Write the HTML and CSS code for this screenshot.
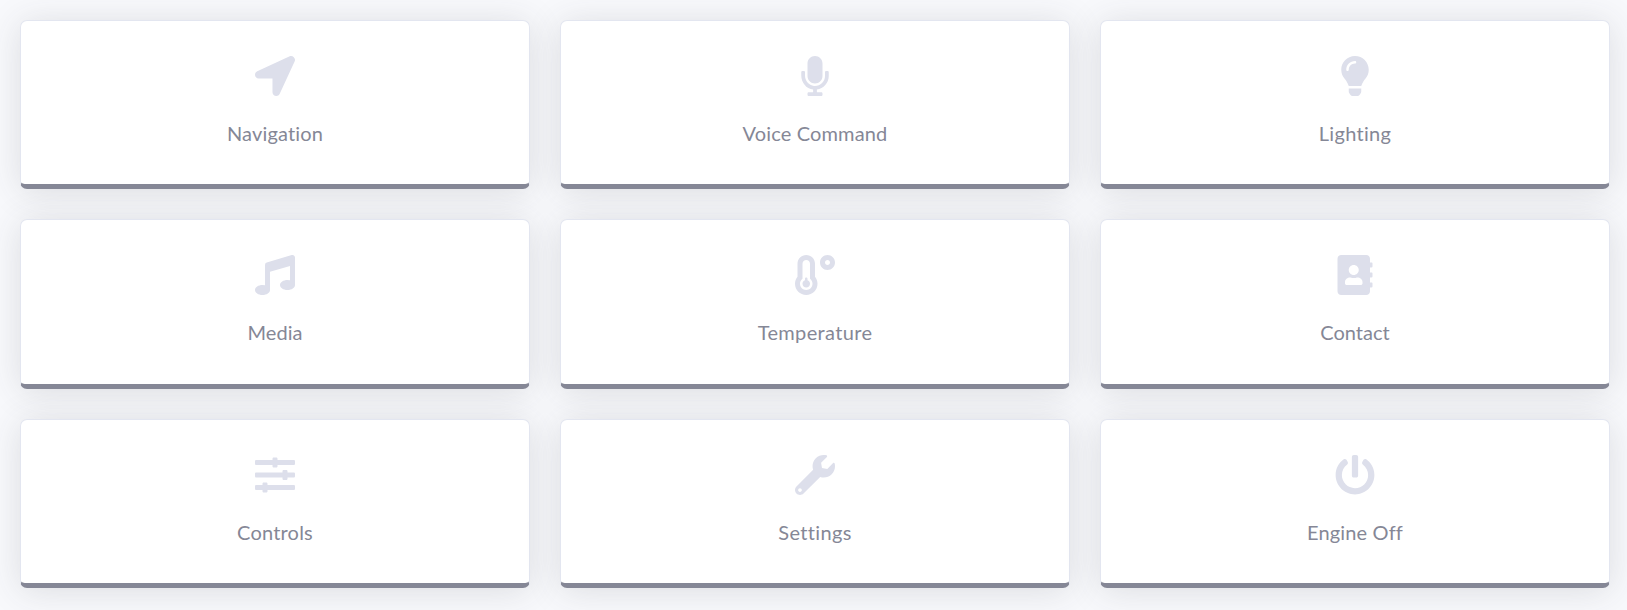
FILE: index.html
```html
<!DOCTYPE html>
<html lang="en">
<head>
<meta charset="utf-8">
<title>Car Dashboard</title>
<link rel="stylesheet" href="styles.css">
</head>
<body>
<main class="grid">
  <a class="card"><svg class="icon" viewBox="0 0 512 512"><path d="M444.52 3.52L28.74 195.42c-47.97 22.39-31.98 92.75 19.19 92.75h175.91v175.91c0 51.17 70.36 67.17 92.75 19.19l191.9-415.78c15.99-38.39-25.59-79.97-63.97-63.95z"/></svg><span class="label navigation">Navigation</span></a>
  <a class="card"><svg class="icon" viewBox="-80 0 512 512"><path d="M176 352c53.02 0 96-42.98 96-96V96c0-53.02-42.98-96-96-96S80 42.98 80 96v160c0 53.02 42.98 96 96 96zm160-160h-16c-8.84 0-16 7.16-16 16v48c0 74.8-64.49 134.82-140.79 127.38C96.71 376.89 48 317.11 48 250.3V208c0-8.84-7.16-16-16-16H16c-8.84 0-16 7.16-16 16v40.16c0 89.64 63.97 169.55 152 181.69V464H96c-8.84 0-16 7.16-16 16v16c0 8.84 7.16 16 16 16h160c8.84 0 16-7.16 16-16v-16c0-8.84-7.16-16-16-16h-56v-33.77C285.71 418.47 352 344.9 352 256v-48c0-8.84-7.16-16-16-16z"/></svg><span class="label voice">Voice Command</span></a>
  <a class="card"><svg class="icon" viewBox="-80 0 512 512"><path d="M96.06 454.35c.01 6.29 1.87 12.45 5.36 17.69l17.09 25.69a31.99 31.99 0 0 0 26.64 14.28h61.71a31.99 31.99 0 0 0 26.64-14.28l17.09-25.69a31.989 31.989 0 0 0 5.36-17.69l.04-38.35H96.01l.05 38.35zM0 176c0 44.37 16.45 84.85 43.56 115.78 16.52 18.85 42.36 58.23 52.21 91.45.04.26.07.52.11.78h160.24c.04-.26.07-.51.11-.78 9.85-33.22 35.69-72.6 52.21-91.45C335.55 260.85 352 220.37 352 176 352 78.61 272.91-.3 175.45 0 73.44.31 0 82.97 0 176zm176-80c-44.11 0-80 35.89-80 80 0 8.84-7.16 16-16 16s-16-7.16-16-16c0-61.76 50.24-112 112-112 8.84 0 16 7.16 16 16s-7.16 16-16 16z"/></svg><span class="label lighting">Lighting</span></a>
  <a class="card"><svg class="icon" viewBox="0 0 512 512"><path d="M470.38 1.51L150.41 96A32 32 0 0 0 128 126.51v261.41A139 139 0 0 0 96 384c-53 0-96 28.66-96 64s43 64 96 64 96-28.66 96-64V214.32l256-75v184.61a138.4 138.4 0 0 0-32-3.93c-53 0-96 28.66-96 64s43 64 96 64 96-28.65 96-64V32a32 32 0 0 0-41.62-30.49z"/></svg><span class="label media">Media</span></a>
  <a class="card"><svg class="icon" viewBox="0 0 512 512"><path d="M416 0c-52.9 0-96 43.1-96 96s43.1 96 96 96 96-43.1 96-96-43.1-96-96-96zm0 128c-17.7 0-32-14.3-32-32s14.3-32 32-32 32 14.3 32 32-14.3 32-32 32zm-160-16C256 50.1 205.9 0 144 0S32 50.1 32 112v166.5C12.3 303.2 0 334 0 368c0 79.5 64.5 144 144 144s144-64.5 144-144c0-34-12.3-64.9-32-89.5V112zM144 448c-44.1 0-80-35.9-80-80 0-25.5 12.2-48.9 32-63.8V112c0-26.5 21.5-48 48-48s48 21.5 48 48v192.2c19.8 14.8 32 38.3 32 63.8 0 44.1-35.9 80-80 80zm16-125.1V304c0-8.8-7.2-16-16-16s-16 7.2-16 16v18.9c-18.6 6.6-32 24.2-32 45.1 0 26.5 21.5 48 48 48s48-21.5 48-48c0-20.9-13.4-38.5-32-45.1z"/></svg><span class="label temperature">Temperature</span></a>
  <a class="card"><svg class="icon" viewBox="-32 0 512 512"><path d="M436 160c6.6 0 12-5.4 12-12v-40c0-6.6-5.4-12-12-12h-20V48c0-26.5-21.5-48-48-48H48C21.5 0 0 21.5 0 48v416c0 26.5 21.5 48 48 48h320c26.5 0 48-21.5 48-48v-48h20c6.6 0 12-5.4 12-12v-40c0-6.6-5.4-12-12-12h-20v-64h20c6.6 0 12-5.4 12-12v-40c0-6.6-5.4-12-12-12h-20v-64h20zm-228-32c35.3 0 64 28.7 64 64s-28.7 64-64 64-64-28.7-64-64 28.7-64 64-64zm112 236.8c0 10.6-10 19.2-22.4 19.2H118.4C106 384 96 375.4 96 364.8v-19.2c0-31.8 30.1-57.6 67.2-57.6h5c12.3 5.1 25.7 8 39.8 8s27.6-2.9 39.8-8h5c37.1 0 67.2 25.8 67.2 57.6v19.2z"/></svg><span class="label contact">Contact</span></a>
  <a class="card"><svg class="icon" viewBox="0 0 512 512"><path d="M496 384H160v-16c0-8.8-7.2-16-16-16h-32c-8.8 0-16 7.2-16 16v16H16c-8.8 0-16 7.2-16 16v32c0 8.8 7.2 16 16 16h80v16c0 8.8 7.2 16 16 16h32c8.8 0 16-7.2 16-16v-16h336c8.8 0 16-7.2 16-16v-32c0-8.8-7.2-16-16-16zm0-160h-80v-16c0-8.8-7.2-16-16-16h-32c-8.8 0-16 7.2-16 16v16H16c-8.8 0-16 7.2-16 16v32c0 8.8 7.2 16 16 16h336v16c0 8.8 7.2 16 16 16h32c8.8 0 16-7.2 16-16v-16h80c8.8 0 16-7.2 16-16v-32c0-8.8-7.2-16-16-16zm0-160H288V48c0-8.8-7.2-16-16-16h-32c-8.8 0-16 7.2-16 16v16H16C7.2 64 0 71.2 0 80v32c0 8.8 7.2 16 16 16h208v16c0 8.8 7.2 16 16 16h32c8.8 0 16-7.2 16-16v-16h208c8.8 0 16-7.2 16-16V80c0-8.8-7.2-16-16-16z"/></svg><span class="label controls">Controls</span></a>
  <a class="card"><svg class="icon" viewBox="0 0 512 512"><path d="M507.73 109.1c-2.24-9.03-13.54-12.09-20.12-5.51l-74.36 74.36-67.88-11.31-11.31-67.88 74.36-74.36c6.62-6.62 3.43-17.9-5.66-20.16-47.38-11.74-99.55.91-136.58 37.93-39.64 39.64-50.55 97.1-34.05 147.2L18.74 402.76c-24.99 24.99-24.99 65.51 0 90.5 24.99 24.99 65.51 24.99 90.5 0l213.21-213.21c50.12 16.71 107.47 5.68 147.37-34.22 37.07-37.07 49.7-89.32 37.91-136.73zM64 472c-13.25 0-24-10.75-24-24 0-13.26 10.75-24 24-24s24 10.74 24 24c0 13.25-10.75 24-24 24z"/></svg><span class="label settings">Settings</span></a>
  <a class="card"><svg class="icon" viewBox="0 0 512 512"><path d="M400 54.1c63 45 104 118.6 104 201.9 0 136.8-110.8 247.7-247.5 248C120 504.3 8.2 393 8 256.4 7.9 173.1 48.9 99.3 111.8 54.2c11.7-8.3 28-4.8 35 7.7L162.6 90c5.9 10.5 3.1 23.8-6.6 31-41.5 30.8-68 79.6-68 134.9-.1 92.3 74.5 168.1 168 168.1 91.6 0 168.6-74.2 168-169.1-.3-51.8-24.7-101.8-68.1-134-9.7-7.2-12.4-20.5-6.5-30.9l15.8-28.1c7-12.4 23.2-16.1 34.8-7.8zM296 264V24c0-13.3-10.7-24-24-24h-32c-13.3 0-24 10.7-24 24v240c0 13.3 10.7 24 24 24h32c13.3 0 24-10.7 24-24z"/></svg><span class="label engine">Engine Off</span></a>
</main>
</body>
</html>
```
FILE: styles.css
```css
* { box-sizing: border-box; }
body {
  margin: 0;
  height: 610px;
  overflow: hidden;
  background: #f8f9fc;
  font-family: Lato, "Open Sans", sans-serif;
  color: #858796;
}
.grid {
  display: grid;
  grid-template-columns: repeat(3, 510px);
  grid-template-rows: 169px 170px 169px;
  gap: 30px;
  padding: 20px;
}
.card {
  display: flex;
  flex-direction: column;
  align-items: center;
  gap: 22px;
  padding-top: 35px;
  background: #fff;
  border: 1px solid #e3e6f0;
  border-bottom: 5px solid #858796;
  border-radius: 7px;
  box-shadow: 0 3px 35px rgba(58, 59, 69, .15);
}
.icon { width: 40px; height: 40px; fill: #dddfeb; flex: none; }
.label {
  font-size: 20px;
  line-height: 30px;
  white-space: nowrap;
  font-variant-ligatures: none;
}
.navigation { letter-spacing: .15px; }
.voice { letter-spacing: .15px; }
.lighting { letter-spacing: .3px; }
.temperature { letter-spacing: .35px; }
.controls { letter-spacing: .2px; }
.settings { letter-spacing: .35px; }
.engine { letter-spacing: .15px; }
```
